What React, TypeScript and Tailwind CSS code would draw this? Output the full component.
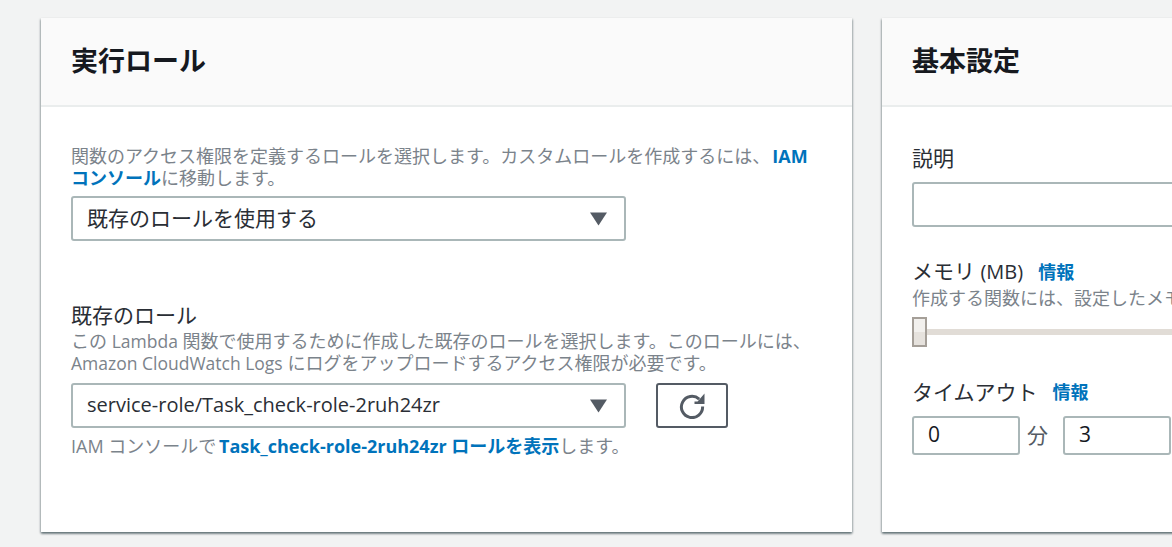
const font = { fontFamily: '"Open Sans", "Noto Sans CJK JP", sans-serif' };

function Caret() {
  return (
    <svg width="17" height="14" viewBox="0 0 17 14" className="shrink-0">
      <path d="M0 0.5H17L8.5 13.5Z" fill="#545b64" />
    </svg>
  );
}

function SelectBox({ children, className }: { children: React.ReactNode; className?: string }) {
  return (
    <div
      className={`flex h-[45px] w-[555px] items-center justify-between rounded-[3px] border-2 border-[#aab7b8] bg-white pl-[14px] pr-[17px] text-[21px] leading-[28px] text-[#2a2e35] ${className ?? ""}`}
    >
      <span className="pb-[2px]">{children}</span>
      <Caret />
    </div>
  );
}

function Refresh() {
  return (
    <svg width="26" height="26" viewBox="0 0 26 26" fill="none">
      <path d="M20.2 6.2A10.6 10.6 0 1 0 23.6 13.5" stroke="#545b64" strokeWidth="3" />
      <path d="M25.5 0.5V11H15.5V8.4H18.6Z" fill="#545b64" />
    </svg>
  );
}

function Card({ title, className, children }: { title: string; className?: string; children: React.ReactNode }) {
  return (
    <section
      className={`h-[514px] shrink-0 bg-white shadow-[0_2px_2px_0_rgba(0,28,36,0.4),1px_1px_2px_0_rgba(0,28,36,0.2),-1px_1px_2px_0_rgba(0,28,36,0.2)] ${className ?? ""}`}
    >
      <header className="flex h-[89px] items-center border-b-2 border-[#eaeded] bg-[#fafafa] px-[30px] pb-[1px]">
        <h2 className="text-[27px] font-bold leading-[36px] text-[#16191f]">{title}</h2>
      </header>
      {children}
    </section>
  );
}

export default function App() {
  return (
    <div style={font} className="flex h-[547px] w-[1172px] gap-[30px] overflow-hidden bg-[#f2f3f3] pl-[41px] pt-[18px]">
      <Card title="実行ロール" className="w-[811px]">
        <div className="px-[30px] pt-[39px]">
          <p className="text-[18px] leading-[21.5px] text-[#7b838b]">
            関数のアクセス権限を定義するロールを選択します。カスタムロールを作成するには、
            <span className="ml-[2px] font-bold text-[#0073bb]">IAM コンソール</span>
            に移動します。
          </p>
          <SelectBox className="mt-[7px]">既存のロールを使用する</SelectBox>
          <div className="mt-[60px] text-[21px] leading-[28px] text-[#2a2e35]">既存のロール</div>
          <p className="mt-[1px] text-[18px] leading-[22px] text-[#7b838b]">
            この <span className="text-[17.5px]">Lambda</span> 関数で使用するために作成した既存のロールを選択します。このロールには、<span className="text-[17.5px]">Amazon CloudWatch Logs</span> にログをアップロードするアクセス権限が必要です。
          </p>
          <div className="mt-[9px] flex gap-[30px]">
            <SelectBox><span className="text-[20px]">service-role/Task_check-role-2ruh24zr</span></SelectBox>
            <button className="flex h-[45px] w-[72px] items-center justify-center rounded-[3px] border-2 border-[#545b64] bg-white">
              <Refresh />
            </button>
          </div>
          <p className="mt-[6px] text-[18px] leading-[24px] text-[#7b838b]">
            IAM コンソールで{" "}
            <span className="ml-[-2px] font-bold text-[#0073bb]">Task_check-role-2ruh24zr ロールを表示</span>
            します。
          </p>
        </div>
      </Card>
      <Card title="基本設定" className="w-[811px]">
        <div className="px-[30px] pt-[37px]">
          <div className="text-[21px] leading-[28px] text-[#2a2e35]">説明</div>
          <div className="mt-[10px] h-[45px] w-[555px] rounded-[3px] border-2 border-[#aab7b8] bg-white" />
          <div className="mt-[30px] flex items-center text-[21px] leading-[28px] text-[#2a2e35]">
            <span>
              メモリ <span className="text-[20px]">(MB)</span>
            </span>
            <span className="ml-[15px] text-[18px] font-bold text-[#0073bb]">情報</span>
          </div>
          <p className="whitespace-nowrap text-[18px] leading-[24px] text-[#7b838b]">
            作成する関数には、設定したメモリに比例して CPU が割り当てられます。
          </p>
          <div className="relative mt-[7px] h-[30px] w-[780px]">
            <div className="absolute left-0 right-0 top-[12px] h-[6px] bg-[#e1dcd6]" />
            <div className="absolute left-0 top-0 h-[30px] w-[15px] border-2 border-[#a59f98] bg-[linear-gradient(#f2f0ed_50%,#e6e2dd_50%)]" />
          </div>
          <div className="mt-[31px] flex items-center text-[21px] leading-[28px] text-[#2a2e35]">
            タイムアウト
            <span className="ml-[15px] text-[18px] font-bold text-[#0073bb]">情報</span>
          </div>
          <div className="mt-[10px] flex items-center">
            <div className="flex h-[39px] w-[108px] items-center rounded-[3px] border-2 border-[#aab7b8] bg-white pl-[14px] pb-[1px] text-[21px] text-[#16191f]">0</div>
            <span className="mx-[7px] w-[29px] text-[21px] text-[#545b64]">分</span>
            <div className="flex h-[39px] w-[108px] items-center rounded-[3px] border-2 border-[#aab7b8] bg-white pl-[14px] pb-[1px] text-[21px] text-[#16191f]">3</div>
          </div>
        </div>
      </Card>
    </div>
  );
}
